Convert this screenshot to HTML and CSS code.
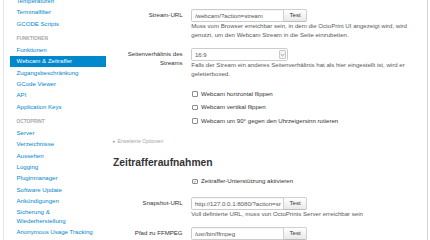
FILE: index.html
```html
<!DOCTYPE html>
<html lang="de">
<head>
<meta charset="utf-8">
<title>Einstellungen – Webcam &amp; Zeitraffer</title>
<link rel="stylesheet" href="styles.css">
</head>
<body>
<div class="frame">
  <nav class="sidenav">
    <ul class="nav-list">
      <li><a href="#">Temperaturen</a></li>
      <li><a href="#">Terminalfilter</a></li>
      <li><a href="#">GCODE Scripts</a></li>
      <li class="nav-header">Funktionen</li>
      <li><a href="#">Funktionen</a></li>
      <li class="active"><a href="#">Webcam &amp; Zeitraffer</a></li>
      <li><a href="#">Zugangsbeschränkung</a></li>
      <li><a href="#">GCode Viewer</a></li>
      <li><a href="#">API</a></li>
      <li><a href="#">Application Keys</a></li>
      <li class="nav-header">OctoPrint</li>
      <li><a href="#">Server</a></li>
      <li><a href="#">Verzeichnisse</a></li>
      <li><a href="#">Aussehen</a></li>
      <li><a href="#">Logging</a></li>
      <li><a href="#">Pluginmanager</a></li>
      <li><a href="#">Software Update</a></li>
      <li><a href="#">Ankündigungen</a></li>
      <li><a href="#">Sicherung &amp; Wiederherstellung</a></li>
      <li><a href="#">Anonymous Usage Tracking</a></li>
    </ul>
  </nav>
  <main class="content">
    <div class="group">
      <label class="ctl-label">Stream-URL</label>
      <div class="controls">
        <div class="input-append">
          <input class="text-input" type="text" value="/webcam/?action=stream">
          <button class="btn" type="button">Test</button>
        </div>
        <p class="help">Muss vom Browser erreichbar sein, in dem die OctoPrint UI angezeigt wird, wird genutzt, um den Webcam Stream in die Seite einzubetten.</p>
      </div>
    </div>

    <div class="group">
      <label class="ctl-label">Seitenverhältnis des Streams</label>
      <div class="controls">
        <div class="select">
          <span class="select-value">16:9</span>
          <span class="select-arrow"><svg width="5" height="4" viewBox="0 0 5 4"><path d="M0.8 1.2 L2.5 2.8 L4.2 1.2" fill="none" stroke="#777" stroke-width="0.7"/></svg></span>
        </div>
        <p class="help">Falls der Stream ein anderes Seitenverhältnis hat als hier eingestellt ist, wird er geletterboxed.</p>
      </div>
    </div>

    <div class="group">
      <div class="controls">
        <label class="check"><span class="box"></span>Webcam horizontal flippen</label>
        <label class="check"><span class="box"></span>Webcam vertikal flippen</label>
        <label class="check"><span class="box"></span>Webcam um 90° gegen den Uhrzeigersinn rotieren</label>
      </div>
    </div>

    <a class="advanced" href="#">▸ Erweiterte Optionen</a>

    <h3 class="section-title">Zeitrafferaufnahmen</h3>

    <div class="group">
      <div class="controls">
        <label class="check single"><span class="box"><svg width="5" height="5" viewBox="0 0 5 5"><path d="M1 2.6 L2.1 3.6 L4 1.3" fill="none" stroke="#555" stroke-width="0.7"/></svg></span>Zeitraffer-Unterstützung aktivieren</label>
      </div>
    </div>

    <div class="group">
      <label class="ctl-label">Snapshot-URL</label>
      <div class="controls">
        <div class="input-append">
          <input class="text-input" type="text" value="http://127.0.0.1:8080/?action=snapshot">
          <button class="btn" type="button">Test</button>
        </div>
        <p class="help">Voll definierte URL, muss von OctoPrints Server erreichbar sein</p>
      </div>
    </div>

    <div class="group">
      <label class="ctl-label">Pfad zu FFMPEG</label>
      <div class="controls">
        <div class="input-append">
          <input class="text-input" type="text" value="/usr/bin/ffmpeg">
          <button class="btn" type="button">Test</button>
        </div>
      </div>
    </div>
  </main>
</div>
</body>
</html>
```

FILE: styles.css
```css
* { box-sizing: border-box; }

html, body {
  margin: 0;
  background: #fff;
}

body {
  font-family: "Liberation Sans", Arial, Helvetica, sans-serif;
  font-size: 6.1px;
  line-height: 8.7px;
  color: #333;
}

.frame {
  display: flex;
  width: 425px;
  height: 240px;
  margin-left: 3px;
  border-left: 1px solid #e6e6e6;
  border-right: 1px solid #d6d6d6;
  overflow: hidden;
}

/* sidebar */
.sidenav {
  flex: 0 0 96px;
  margin-left: 6px;
}

.nav-list {
  list-style: none;
  margin: -4.3px 0 0;
  padding: 0;
}

.nav-list a {
  display: block;
  padding: 1.3px 6.5px;
  color: #0088cc;
  text-decoration: none;
}

.nav-list .active a {
  background: #0088cc;
  color: #fff;
}

.nav-header {
  margin-top: 3.9px;
  padding: 1.3px 6.5px;
  font-size: 4.8px;
  line-height: 8.7px;
  font-weight: bold;
  text-transform: uppercase;
  color: #a8a8a8;
}

/* main */
.content {
  flex: 1;
  margin-left: 7px;
  padding: 9.2px 9px 0 0;
}

.group {
  display: grid;
  grid-template-columns: 69.6px 1fr;
  column-gap: 8.7px;
  margin-bottom: 8.7px;
}

.ctl-label {
  padding-top: 2.2px;
  text-align: right;
  color: #333;
}

.controls {
  grid-column: 2;
  min-width: 0;
}

.input-append {
  display: flex;
  height: 13px;
}

.text-input {
  width: 93px;
  height: 13px;
  margin: 0;
  padding: 0 2.6px;
  border: 1px solid #ccc;
  border-radius: 1.7px 0 0 1.7px;
  font: inherit;
  color: #555;
  background: #fff;
  box-shadow: inset 0 0.5px 0.5px rgba(0, 0, 0, 0.075);
  outline: none;
}

.btn {
  margin: 0 0 0 -1px;
  padding: 0 5.2px;
  height: 13px;
  border: 1px solid #d0d0d0;
  border-bottom-color: #bdbdbd;
  border-radius: 0 1.7px 1.7px 0;
  background: linear-gradient(#ffffff, #e9e9e9);
  font: inherit;
  color: #333;
}

.help {
  margin: 0;
  color: #595959;
}

.select {
  display: flex;
  width: 96.5px;
  height: 13px;
  border: 1px solid #ccc;
  border-radius: 1.7px;
  color: #555;
  background: #fff;
}

.select-value {
  flex: 1;
  padding-left: 2.6px;
  line-height: 11px;
}

.select-arrow {
  display: flex;
  align-items: center;
  justify-content: center;
  width: 7px;
  margin: 1px;
  border: 0.6px solid #c8c8c8;
  border-radius: 1px;
  background: #f4f4f4;
}

.check {
  display: flex;
  align-items: center;
  padding-top: 2.2px;
  margin-bottom: 2.6px;
  line-height: 8.7px;
  color: #333;
}

.check.single {
  margin-bottom: 2.2px;
}

.box {
  display: flex;
  align-items: center;
  justify-content: center;
  flex: 0 0 5.8px;
  width: 5.8px;
  height: 5.8px;
  margin: 0 3.4px 0 0.6px;
  border: 0.7px solid #8c8c8c;
  border-radius: 1px;
  background: #fff;
}

.advanced {
  display: block;
  font-size: 5.2px;
  line-height: 8.7px;
  color: #a6a6a6;
  text-decoration: none;
}

.section-title {
  margin: 9px 0 3.3px;
  font-size: 10.3px;
  line-height: 17.4px;
  font-weight: bold;
  color: #333;
}
```
